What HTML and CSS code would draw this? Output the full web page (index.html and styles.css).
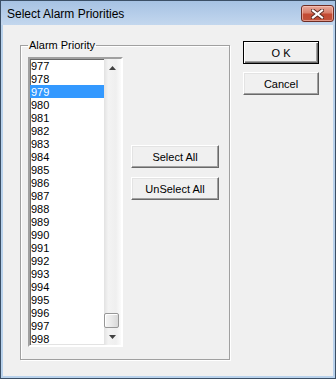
FILE: index.html
```html
<!DOCTYPE html>
<html>
<head>
<meta charset="utf-8">
<link rel="stylesheet" href="styles.css">
</head>
<body>
<div class="window">
  <div class="titlebar">
    <span class="title">Select Alarm Priorities</span>
    <button class="close" aria-label="Close">
      <svg width="13" height="10" viewBox="0 0 13 10">
        <path d="M2 1.5 L11 8.5 M11 1.5 L2 8.5" stroke="#5b2a22" stroke-width="4" stroke-linecap="square" fill="none"/>
        <path d="M2 1.5 L11 8.5 M11 1.5 L2 8.5" stroke="#ffffff" stroke-width="2.2" stroke-linecap="square" fill="none"/>
      </svg>
    </button>
  </div>
  <div class="client">
    <fieldset class="group">
      <legend class="group-label">Alarm Priority</legend>
      <div class="group-body">
        <div class="listbox">
          <ul class="items">
            <li>977</li><li>978</li><li class="selected">979</li><li>980</li><li>981</li><li>982</li>
            <li>983</li><li>984</li><li>985</li><li>986</li><li>987</li><li>988</li><li>989</li>
            <li>990</li><li>991</li><li>992</li><li>993</li><li>994</li><li>995</li><li>996</li>
            <li>997</li><li>998</li>
          </ul>
          <div class="scrollbar">
            <div class="sb-arrow"><svg width="7" height="4" viewBox="0 0 7 4"><path d="M3.5 0 L7 4 L0 4 Z" fill="#404040"/></svg></div>
            <div class="sb-track"></div>
            <div class="sb-thumb"></div>
            <div class="sb-arrow"><svg width="7" height="4" viewBox="0 0 7 4"><path d="M0 0 L7 0 L3.5 4 Z" fill="#404040"/></svg></div>
          </div>
        </div>
        <div class="mid-buttons">
          <button class="btn">Select All</button>
          <button class="btn">UnSelect All</button>
        </div>
      </div>
    </fieldset>
    <div class="dialog-buttons">
      <button class="btn default">O K</button>
      <button class="btn">Cancel</button>
    </div>
  </div>
</div>
</body>
</html>
```
FILE: styles.css
```css
* { box-sizing: border-box; }
html, body { margin: 0; padding: 0; background: #f0f0f0; }
body { width: 336px; height: 379px; overflow: hidden; font-family: "Liberation Sans", Arial, sans-serif; }

.window {
  width: 336px;
  height: 379px;
  border: 1px solid #3b4f66;
  background: #b9d2ec;
  display: flex;
  flex-direction: column;
}

.titlebar {
  height: 24px;
  flex: none;
  display: flex;
  align-items: flex-start;
  justify-content: space-between;
  background: linear-gradient(#a6c2e3, #c3d7ee);
}
.title {
  font-size: 12px;
  line-height: 14px;
  margin: 6px 0 0 6px;
  color: #000;
}
.close {
  width: 33px;
  height: 17px;
  margin: 4px 1px 0 0;
  padding: 0;
  border: 1px solid #6e2d24;
  border-radius: 3px;
  background: linear-gradient(#e9a99c 0%, #d8806c 45%, #c44a33 55%, #c0533c 100%);
  box-shadow: inset 0 0 0 1px rgba(255, 210, 200, 0.55);
  display: flex;
  align-items: center;
  justify-content: center;
}
.close svg { display: block; }

.client {
  flex: 1;
  margin: 0 2px 2px 2px;
  background: #f0f0f0;
  display: flex;
  align-items: flex-start;
  padding: 15px 0 0 17px;
  font-size: 11px;
  color: #000;
}

.group {
  margin: 0;
  padding: 6px 6px 0 7px;
  width: 210px;
  height: 320px;
  min-width: 0;
  border: 1px solid #a0a0a0;
  box-shadow: 1px 1px 0 #fff, inset 1px 1px 0 #fff;
}
.group-label {
  padding: 0 1px;
  margin-left: 0;
  font-size: 11px;
  line-height: 11px;
}
.group-body {
  display: flex;
  align-items: flex-start;
}

.listbox {
  width: 95px;
  height: 290px;
  display: flex;
  background: #fff;
  border-style: solid;
  border-width: 2px;
  border-color: #a0a0a0 #ffffff #ffffff #a0a0a0;
  box-shadow: inset 1px 1px 0 #696969, inset -1px -1px 0 #e3e3e3;
}
.items {
  list-style: none;
  margin: 0;
  padding: 0;
  flex: 1;
  min-width: 0;
}
.items li {
  height: 13px;
  line-height: 12px;
  padding: 1px 0 0 1px;
  white-space: nowrap;
}
.items li.selected {
  background: #3399ff;
  color: #fff;
}

.scrollbar {
  width: 17px;
  flex: none;
  display: flex;
  flex-direction: column;
  background: linear-gradient(to right, #e2e2e2, #f3f3f3 25%, #efefef 70%, #fbfbfb);
}
.sb-arrow {
  height: 17px;
  flex: none;
  display: flex;
  align-items: center;
  justify-content: center;
}
.sb-arrow svg { display: block; }
.sb-track { flex: 1; }
.sb-thumb {
  height: 15px;
  width: 15px;
  flex: none;
  border: 1px solid #979797;
  border-radius: 2px;
  background: linear-gradient(to right, #f6f6f6, #e9e9e9 50%, #d8d8d8);
  box-shadow: inset 1px 1px 0 #fff;
}

.mid-buttons {
  display: flex;
  flex-direction: column;
  gap: 9px;
  margin: 88px 0 0 8px;
}

.btn {
  font-family: "Liberation Sans", Arial, sans-serif;
  font-size: 11px;
  color: #000;
  height: 23px;
  padding: 0;
  background: #f0f0f0;
  border-style: solid;
  border-width: 1px;
  border-color: #ffffff #696969 #696969 #ffffff;
  box-shadow: inset -1px -1px 0 #a0a0a0, inset 1px 1px 0 #e3e3e3;
}
.mid-buttons .btn { width: 88px; }

.dialog-buttons {
  display: flex;
  flex-direction: column;
  gap: 8px;
  margin: 1px 0 0 13px;
}
.dialog-buttons .btn { width: 76px; }
.btn.default {
  border-color: #000;
  box-shadow: inset 1px 1px 0 #fff, inset -1px -1px 0 #696969, inset -2px -2px 0 #a0a0a0;
}
```
